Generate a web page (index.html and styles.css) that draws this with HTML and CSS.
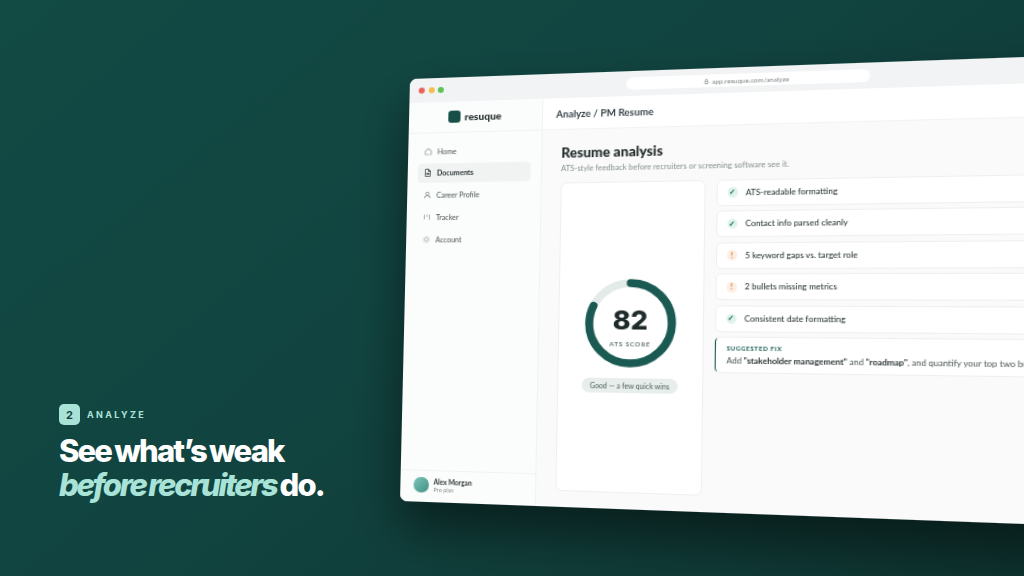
FILE: index.html
```html
<!DOCTYPE html>
<html>
<head>
  <title>Resuque - Analyze</title>
  <link rel="stylesheet" href="styles.css">
</head>
<body>
  <div class="hero">
    <div class="step">
      <span class="step-num">2</span>
      <span class="step-label">ANALYZE</span>
    </div>
    <h1 class="headline">See what’s weak<br><em>before recruiters</em> do.</h1>
  </div>

  <div class="window">
    <div class="chrome">
      <div class="dots">
        <span class="dot dot-red"></span>
        <span class="dot dot-yellow"></span>
        <span class="dot dot-green"></span>
      </div>
      <div class="address">
        <svg class="lock" viewBox="0 0 24 24"><rect x="5" y="11" width="14" height="10" rx="2"/><path d="M8 11V7a4 4 0 0 1 8 0v4"/></svg>
        app.resuque.com/analyze
      </div>
    </div>

    <div class="app">
      <div class="sidebar">
        <div class="brand">
          <span class="brand-mark"></span>
          <span class="brand-name">resuque</span>
        </div>
        <div class="nav">
          <div class="nav-item">
            <svg class="nav-icon" viewBox="0 0 24 24"><path d="M3 10.5 12 3l9 7.5V20a1 1 0 0 1-1 1H4a1 1 0 0 1-1-1z"/></svg>
            Home
          </div>
          <div class="nav-item nav-active">
            <svg class="nav-icon" viewBox="0 0 24 24"><path d="M14 2H6a2 2 0 0 0-2 2v16a2 2 0 0 0 2 2h12a2 2 0 0 0 2-2V8z"/><path d="M14 2v6h6"/><path d="M8 13h8M8 17h8"/></svg>
            Documents
          </div>
          <div class="nav-item">
            <svg class="nav-icon" viewBox="0 0 24 24"><circle cx="12" cy="8" r="4.5"/><path d="M4 21c0-4.5 3.5-7 8-7s8 2.500 8 7"/></svg>
            Career Profile
          </div>
          <div class="nav-item">
            <svg class="nav-icon" viewBox="0 0 24 24"><path d="M5 5v12M12 5v5M19 5v14"/></svg>
            Tracker
          </div>
          <div class="nav-item">
            <svg class="nav-icon nav-icon-thin" viewBox="0 0 24 24"><circle cx="12" cy="12" r="4.5"/><path d="M12 2v3M12 19v3M2 12h3M19 12h3M5 5l2 2M17 17l2 2M5 19l2-2M17 7l2-2"/></svg>
            Account
          </div>
        </div>
        <div class="user">
          <span class="avatar"></span>
          <div>
            <div class="user-name">Alex Morgan</div>
            <div class="user-plan">Pro plan</div>
          </div>
        </div>
      </div>

      <div class="main">
        <div class="topbar">Analyze / PM Resume</div>
        <div class="content">
          <h2 class="page-title">Resume analysis</h2>
          <p class="page-sub">ATS-style feedback before recruiters or screening software see it.</p>
          <div class="columns">
            <div class="score-card">
              <div class="ring">
                <svg class="ring-svg" viewBox="0 0 84 84">
                  <circle class="ring-track" cx="42" cy="42" r="38"/>
                  <circle class="ring-value" cx="42" cy="42" r="38" stroke-dasharray="195.800 238.800"/>
                </svg>
                <div class="ring-text">
                  <div class="score">82</div>
                  <div class="score-label">ATS SCORE</div>
                </div>
              </div>
              <div class="pill">Good — a few quick wins</div>
            </div>
            <div class="checks">
              <div class="check-row"><span class="mark mark-ok">&#10003;</span>ATS-readable formatting</div>
              <div class="check-row"><span class="mark mark-ok">&#10003;</span>Contact info parsed cleanly</div>
              <div class="check-row"><span class="mark mark-warn">!</span>5 keyword gaps vs. target role</div>
              <div class="check-row"><span class="mark mark-warn">!</span>2 bullets missing metrics</div>
              <div class="check-row"><span class="mark mark-ok">&#10003;</span>Consistent date formatting</div>
              <div class="fix">
                <div class="fix-label">SUGGESTED FIX</div>
                <div class="fix-text">Add <b>"stakeholder management"</b> and <b>"roadmap"</b>, and quantify your top two bullets.</div>
              </div>
            </div>
          </div>
        </div>
      </div>
    </div>
  </div>
</body>
</html>
```

FILE: styles.css
```css
body {
  margin: 0;
  width: 1024px;
  height: 576px;
  overflow: hidden;
  position: relative;
  display: flex;
  flex-direction: column;
  justify-content: flex-end;
  font-family: "Lato", "Noto Sans", sans-serif;
  background: linear-gradient(140deg, #124a44 0%, #114440 45%, #0e3531 100%);
}

.hero {
  padding: 0 0 74px 59px;
  color: #fff;
}

.step {
  display: flex;
  align-items: center;
  gap: 7px;
  margin-bottom: 9px;
}

.step-num {
  width: 21px;
  height: 21px;
  border-radius: 5px;
  background-color: #a9e3d8;
  color: #123f3a;
  font-family: "Inter", sans-serif;
  font-size: 11px;
  font-weight: 700;
  display: flex;
  align-items: center;
  justify-content: center;
}

.step-label {
  font-family: "Inter", sans-serif;
  font-size: 9px;
  font-weight: 700;
  letter-spacing: 0.26em;
  color: #a9e3d8;
}

.headline {
  margin: 0;
  font-family: "Inter", sans-serif;
  font-size: 31px;
  line-height: 34px;
  font-weight: 800;
  letter-spacing: -0.06em;
  word-spacing: -0.06em;
}

.headline em {
  color: #a9e3d8;
  letter-spacing: -0.075em;
}

/* corners measured off the screenshot, the window is a perspective plane */
.window {
  position: absolute;
  left: 0;
  top: 0;
  width: 637px;
  height: 416px;
  border-radius: 7px;
  overflow: hidden;
  display: flex;
  flex-direction: column;
  background-color: #fff;
  box-shadow: 0 26px 50px rgba(0, 0, 0, 0.5);
  filter: blur(0.25px);
  transform-origin: 0 0;
  transform: matrix3d(0.92831, -0.049365, 0, -0.00017189, -0.03945, 0.99512, 0, -0.00003852, 0, 0, 1, 0, 410, 79, 0, 1);
}

.chrome {
  height: 24px;
  flex-shrink: 0;
  background-color: #f1f3f4;
  position: relative;
  display: flex;
  align-items: center;
  padding-left: 9px;
}

.dots {
  display: flex;
  gap: 3.5px;
}

.dot {
  width: 6px;
  height: 6px;
  border-radius: 50%;
}

.dot-red {
  background-color: #ee5f57;
}

.dot-yellow {
  background-color: #f5bd4f;
}

.dot-green {
  background-color: #5fc454;
}

.address {
  position: absolute;
  left: 209px;
  top: 6px;
  width: 218px;
  height: 12px;
  border-radius: 6px;
  background-color: #fff;
  color: #7b8584;
  font-size: 6.2px;
  display: flex;
  align-items: center;
  justify-content: center;
  gap: 3px;
}

.lock {
  width: 5px;
  height: 5px;
  fill: none;
  stroke: #7b8584;
  stroke-width: 2.5;
}

.app {
  flex: 1;
  display: flex;
  min-height: 0;
}

.sidebar {
  width: 131px;
  flex-shrink: 0;
  background-color: #fbfcfc;
  border-right: 1px solid #f1f3f3;
  box-sizing: border-box;
  display: flex;
  flex-direction: column;
}

.brand {
  height: 31px;
  flex-shrink: 0;
  box-sizing: border-box;
  border-bottom: 1px solid #f1f3f3;
  display: flex;
  align-items: center;
  justify-content: center;
  gap: 4px;
}

.brand-mark {
  width: 12px;
  height: 12px;
  border-radius: 3px;
  background-color: #174f48;
}

.brand-name {
  font-size: 10px;
  font-weight: 900;
  color: #26302f;
}

.nav {
  flex: 1;
  padding: 8px 10px;
  display: flex;
  flex-direction: column;
  gap: 2.2px;
}

.nav-item {
  height: 19.5px;
  padding-left: 6px;
  border-radius: 4px;
  display: flex;
  align-items: center;
  gap: 5px;
  font-size: 7px;
  color: #4a5654;
}

.nav-active {
  background-color: #f1f3f3;
  color: #2c3635;
  font-weight: 700;
}

.nav-icon {
  width: 8px;
  height: 8px;
  fill: none;
  stroke: #7a8583;
  stroke-width: 2;
  stroke-linecap: round;
  stroke-linejoin: round;
}

.nav-icon-thin {
  stroke-width: 1.5;
}

.nav-active .nav-icon {
  stroke: #2c3635;
}

.user {
  height: 31px;
  box-sizing: border-box;
  border-top: 1px solid #f1f3f3;
  padding: 0 0 3px 13px;
  display: flex;
  align-items: center;
  gap: 5px;
}

.avatar {
  width: 14.500px;
  height: 14.500px;
  border-radius: 50%;
  background: linear-gradient(135deg, #7cc7b8, #3f8f83);
}

.user-name {
  font-size: 6.500px;
  font-weight: 700;
  color: #2c3635;
}

.user-plan {
  font-size: 5.500px;
  color: #87918f;
  margin-top: 1px;
}

.main {
  flex: 1;
  display: flex;
  flex-direction: column;
  min-width: 0;
  background-color: #fafafa;
}

.topbar {
  height: 31px;
  flex-shrink: 0;
  box-sizing: border-box;
  padding-left: 12.500px;
  display: flex;
  align-items: center;
  background-color: #fff;
  border-bottom: 1px solid #f1f3f3;
  font-size: 9.3px;
  font-weight: 700;
  color: #39454a;
}

.content {
  flex: 1;
  min-height: 0;
  padding: 14px 18px 15px;
  display: flex;
  flex-direction: column;
}

.page-title {
  margin: 0;
  font-size: 13px;
  line-height: 16px;
  font-weight: 900;
  color: #232c2c;
}

.page-sub {
  margin: 3px 0 0;
  font-size: 7.3px;
  line-height: 9px;
  color: #87918f;
}

.columns {
  flex: 1;
  min-height: 0;
  margin-top: 8.500px;
  display: flex;
  gap: 10px;
}

.score-card {
  width: 134px;
  flex-shrink: 0;
  box-sizing: border-box;
  background-color: #fff;
  border: 1px solid #eef0f0;
  border-radius: 6px;
  display: flex;
  flex-direction: column;
  align-items: center;
  justify-content: center;
  gap: 10px;
}

.ring {
  width: 84px;
  height: 84px;
  position: relative;
}

.ring-svg {
  width: 84px;
  height: 84px;
  fill: none;
  stroke-width: 7.500;
  transform: rotate(-90deg);
}

.ring-track {
  stroke: #e3ebe9;
}

.ring-value {
  stroke: #1a5a52;
  stroke-linecap: round;
}

.ring-text {
  position: absolute;
  left: 0;
  right: 0;
  top: 25px;
  text-align: center;
}

.score {
  font-family: "Inter", sans-serif;
  font-size: 25px;
  line-height: 28px;
  font-weight: 800;
  color: #1f2a2a;
}

.score-label {
  margin-top: 5px;
  font-size: 6px;
  font-weight: 700;
  letter-spacing: 0.12em;
  color: #6b7877;
}

.pill {
  padding: 0 7px;
  height: 14px;
  border-radius: 7px;
  background-color: #e8eeec;
  font-size: 6.700px;
  line-height: 14px;
  color: #4f5f5c;
}

.checks {
  flex: 1;
  min-width: 0;
  display: flex;
  flex-direction: column;
  gap: 4.600px;
}

.check-row {
  height: 25px;
  box-sizing: border-box;
  padding-left: 8.500px;
  background-color: #fff;
  border: 1px solid #eef0f0;
  border-radius: 5px;
  display: flex;
  align-items: center;
  gap: 7px;
  font-size: 7.500px;
  font-weight: 500;
  color: #2f3a38;
}

.mark {
  width: 9.500px;
  height: 9.500px;
  border-radius: 50%;
  display: flex;
  align-items: center;
  justify-content: center;
  font-size: 6.500px;
  font-weight: 900;
}

.mark-ok {
  background-color: #dff3ec;
  color: #1b6b5f;
}

.mark-warn {
  background-color: #fdeee3;
  color: #d9773a;
}

.fix {
  height: 34px;
  box-sizing: border-box;
  padding: 7px 9.500px;
  background-color: #fff;
  border: 1px solid #eef0f0;
  border-left: 1.500px solid #1a5c54;
  border-radius: 5px;
  white-space: nowrap;
}

.fix-label {
  font-size: 5.500px;
  font-weight: 900;
  letter-spacing: 0.1em;
  color: #2a6a60;
}

.fix-text {
  margin-top: 4px;
  font-size: 7.500px;
  color: #4a5654;
}

.fix-text b {
  color: #2a3333;
}
```
